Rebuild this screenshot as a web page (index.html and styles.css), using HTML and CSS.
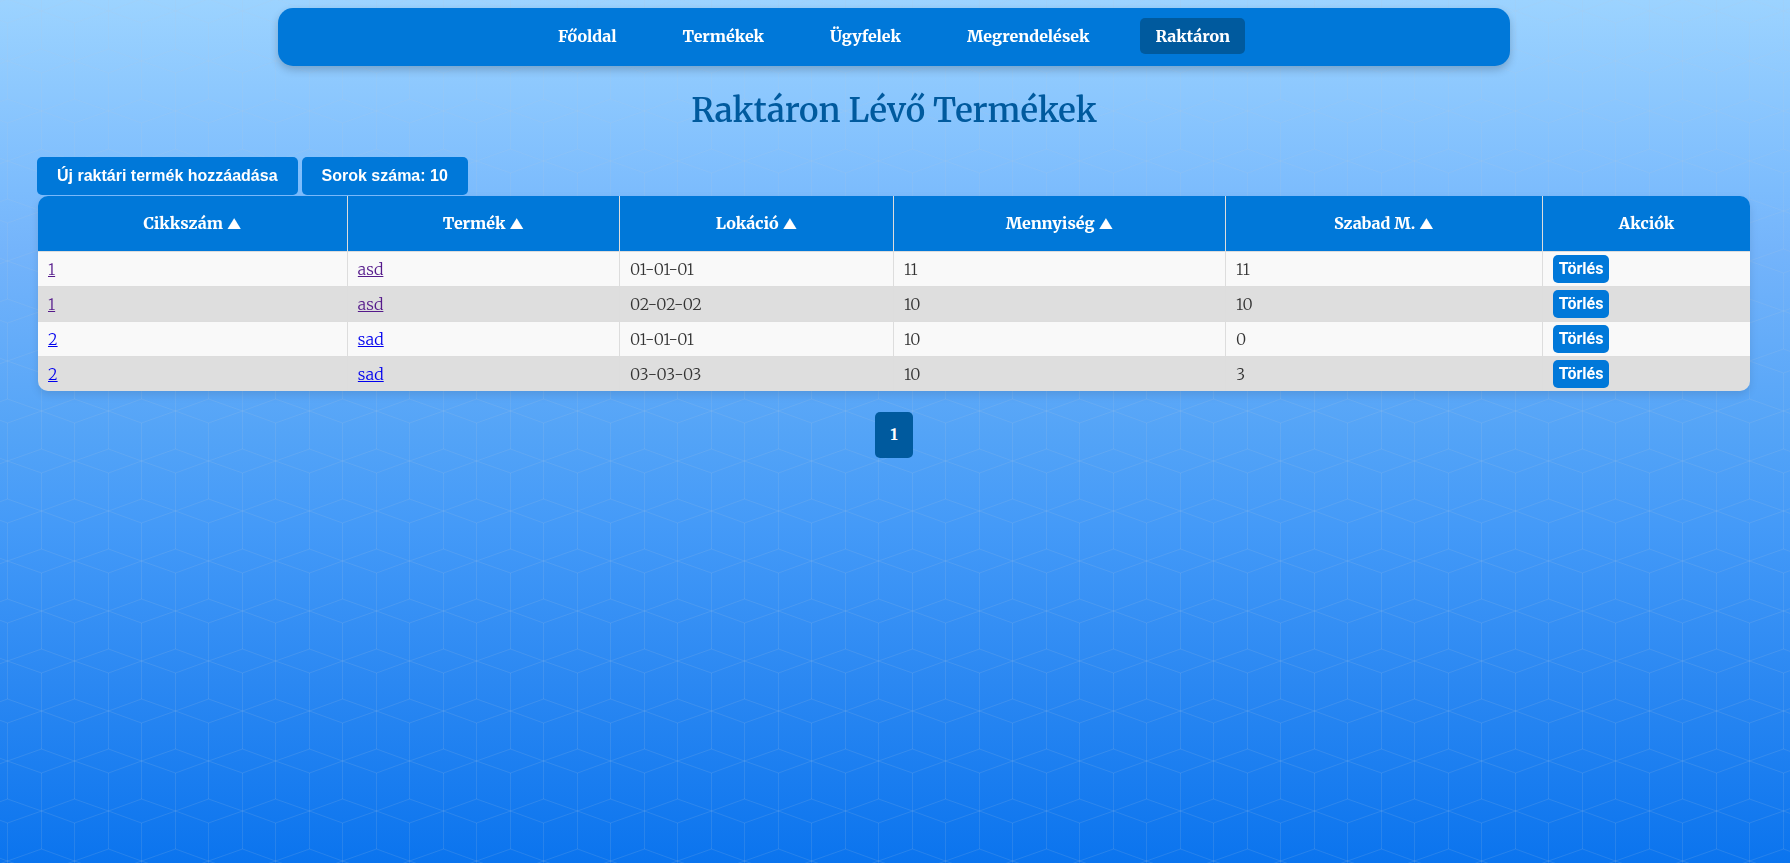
FILE: index.html
```
<!DOCTYPE html>
<html lang="hu">
<head>
<meta charset="utf-8">
<title>Raktáron Lévő Termékek</title>
<link rel="stylesheet" href="styles.css">
</head>
<body>
<svg class="backdrop" aria-hidden="true">
  <defs>
    <pattern id="cubes" width="67" height="100" patternUnits="userSpaceOnUse" x="-9" y="36">
      <path d="M0 19L16.500 25L50.500 13L67 19M0 31L16.500 25L50.500 37L67 31M0 69L16.500 63L50.500 75L67 69M0 81L16.500 87L50.500 75L67 81M50.500 0V13M50.500 37V100M16.500 0V63M16.500 87V100"/>
    </pattern>
  </defs>
  <rect width="100%" height="100%" fill="url(#cubes)"/>
</svg>
<nav class="navbar">
  <a href="#">Főoldal</a>
  <a href="#">Termékek</a>
  <a href="#">Ügyfelek</a>
  <a href="#">Megrendelések</a>
  <a href="#" class="active" aria-current="page">Raktáron</a>
</nav>
<main class="content">
  <h1>Raktáron Lévő Termékek</h1>
  <div class="toolbar">
    <button type="button" class="button">Új raktári termék hozzáadása</button>
    <button type="button" class="button">Sorok száma: 10</button>
  </div>
  <table class="stock">
    <colgroup>
      <col class="col-sku"><col class="col-product"><col class="col-location"><col class="col-quantity"><col class="col-free"><col class="col-actions">
    </colgroup>
    <thead>
      <tr><th>Cikkszám <span class="sort">▲</span></th><th>Termék <span class="sort">▲</span></th><th>Lokáció <span class="sort">▲</span></th><th>Mennyiség <span class="sort">▲</span></th><th>Szabad M. <span class="sort">▲</span></th><th>Akciók</th></tr>
    </thead>
    <tbody>
      <tr><td><a class="seen" href="#">1</a></td><td><a class="seen" href="#">asd</a></td><td>01-01-01</td><td>11</td><td>11</td><td><button type="button" class="delete">Törlés</button></td></tr>
      <tr><td><a class="seen" href="#">1</a></td><td><a class="seen" href="#">asd</a></td><td>02-02-02</td><td>10</td><td>10</td><td><button type="button" class="delete">Törlés</button></td></tr>
      <tr><td><a href="#">2</a></td><td><a href="#">sad</a></td><td>01-01-01</td><td>10</td><td>0</td><td><button type="button" class="delete">Törlés</button></td></tr>
      <tr><td><a href="#">2</a></td><td><a href="#">sad</a></td><td>03-03-03</td><td>10</td><td>3</td><td><button type="button" class="delete">Törlés</button></td></tr>
    </tbody>
  </table>
  <div class="pager"><a href="#" aria-current="page">1</a></div>
</main>
</body>
</html>
```
FILE: styles.css
```
* { box-sizing: border-box; }
body {
  margin: 0;
  padding: 8px 10px 8px 8px;
  min-height: 100vh;
  color: #333;
  font: 300 16px/24px Merriweather, "Liberation Serif", serif;
  background: linear-gradient(#9cd3ff, #7cbcfd 22%, #74b4fb 29%, #54a4f7 50%, #449af8 61%, #2b88f2 79%, #0b74ee) fixed;
}
.backdrop { position: fixed; inset: 0; width: 100%; height: 100%; z-index: -1; }
.backdrop path { fill: none; stroke: #b4c8dc; stroke-opacity: .15; stroke-width: 1; }
.navbar {
  display: flex;
  justify-content: center;
  gap: 36px;
  width: 70%;
  max-width: 1232px;
  margin: 0 auto;
  padding: 10px 16px 12px;
  border-radius: 15px;
  background: #0078d9;
  box-shadow: 0 4px 8px rgba(0, 0, 0, .2);
}
.navbar a {
  padding: 6px 15px;
  border-radius: 5px;
  color: #fff;
  font-weight: 800;
  text-decoration: none;
}
.navbar .active { background: #005a9e; }
.content { margin: 0 29px; }
h1 {
  margin: 21px 0 22px;
  color: #005a9e;
  font-size: 33px;
  font-weight: 600;
  line-height: 48px;
  text-align: center;
}
.toolbar { display: flex; gap: 4px; }
.button {
  padding: 10px 20px;
  border: 0;
  border-radius: 5px;
  color: #fff;
  background: #0078d9;
  font: bold 16px/18px "Liberation Sans", Arial, sans-serif;
}
.stock {
  width: calc(100% - 2px);
  margin: 1px 0 0 1px;
  table-layout: fixed;
  border-collapse: separate;
  border-spacing: 0;
  border-radius: 10px;
  overflow: hidden;
  box-shadow: 0 4px 8px rgba(0, 0, 0, .1);
}
.col-sku { width: 18.1%; }
.col-product { width: 15.9%; }
.col-location { width: 16%; }
.col-quantity { width: 19.4%; }
.col-free { width: 18.5%; }
th { padding: 15px 10px 16px; color: #fff; background: #0078d9; font-weight: 800; }
.sort { font-family: Inter, sans-serif; font-size: 14px; line-height: 1; }
td { height: 35px; padding: 0 10px; line-height: 24px; }
th, td { border-bottom: 1px solid #ddd; border-right: 1px solid #ddd; }
th:last-child, td:last-child { border-right: 0; }
tr:nth-child(odd) td { background: #f9f9f9; }
tr:nth-child(even) td { background: #dedede; }
tbody tr:last-child td { height: 34px; border-bottom: 0; }
td a { color: #00e; }
td .seen { color: #551a8b; }
.delete {
  display: block;
  padding: 5px 6px;
  border: 0;
  border-radius: 5px;
  color: #fff;
  background: #0078d9;
  font: bold 16px/18px Roboto, sans-serif;
}
.pager { display: flex; justify-content: center; margin-top: 21px; }
.pager a {
  padding: 10px 15px 12px;
  border-radius: 5px;
  color: #fff;
  background: #005a9e;
  font-weight: bold;
  text-decoration: none;
}
```
